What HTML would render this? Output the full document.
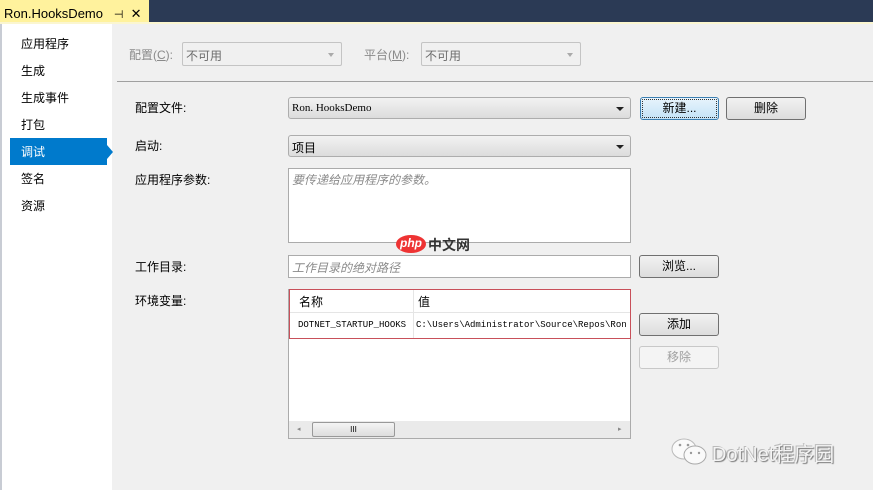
<!DOCTYPE html>
<html><head><meta charset="utf-8"><style>
*{box-sizing:border-box;margin:0;padding:0}
body{width:873px;height:490px;overflow:hidden;background:#f0f0f0;font-family:"Liberation Sans","Noto Sans CJK SC",sans-serif;font-size:12px;color:#000;position:relative}
.a{position:absolute}
.top{left:0;top:0;width:873px;height:22px;background:#2b3a55}
.tab{left:0;top:0;width:149px;height:24px;background:#fff29d;font-size:13px;padding:6px 0 0 4px;white-space:nowrap}
.yl{left:0;top:22px;width:873px;height:2px;background:#fbf6d0}
.side{left:0;top:24px;width:112px;height:466px;background:#fff;border-left:2px solid #c8ccd4}
.nav{left:21px;font-size:12px}
.sel{left:10px;top:138px;width:97px;height:27px;background:#007acc}
.lbl{font-size:12px}
.dd{border:1px solid #adadad;border-radius:3px;background:linear-gradient(#f2f2f2,#dcdcdc);height:22px;font-size:12px;padding:3px 3px}
.dd:after{content:"";position:absolute;right:6px;top:9px;border-left:4px solid transparent;border-right:4px solid transparent;border-top:4px solid #222}
.ddd{border:1px solid #c4c4c4;border-radius:2px;background:#f0f0f0;height:24px;padding:4px 3px;color:#6d6d6d}
.ddd:after{content:"";position:absolute;right:7px;top:10px;border-left:3px solid transparent;border-right:3px solid transparent;border-top:4px solid #aaa}
.btn{border:1px solid #707070;border-radius:3px;background:linear-gradient(#f2f2f2,#dddddd);height:23px;text-align:center;line-height:21px;font-size:12px}
.tb{background:#fff;border:1px solid #ababab}
.ph{color:#8a8a8a;font-style:italic;font-size:12px}
.mono{font-family:"Liberation Mono","Noto Sans CJK SC",monospace;font-size:9px}
</style></head><body>
<div class="a top"></div>
<div class="a tab">Ron.HooksDemo&nbsp;&nbsp;&nbsp;<span style="font-size:11px">⊣</span>&nbsp;&nbsp;✕</div>
<div class="a yl"></div>
<div class="a side"></div>
<div class="a sel"></div>
<div class="a" style="left:107px;top:145px;border-top:7px solid transparent;border-bottom:7px solid transparent;border-left:6px solid #007acc"></div>
<div class="a nav" style="top:35px">应用程序</div>
<div class="a nav" style="top:62px">生成</div>
<div class="a nav" style="top:89px">生成事件</div>
<div class="a nav" style="top:116px">打包</div>
<div class="a nav" style="top:143px;color:#fff">调试</div>
<div class="a nav" style="top:170px">签名</div>
<div class="a nav" style="top:197px">资源</div>

<div class="a lbl" style="left:129px;top:46px;color:#8a8a8a">配置(<u>C</u>):</div>
<div class="a ddd" style="left:182px;top:42px;width:160px">不可用</div>
<div class="a lbl" style="left:364px;top:46px;color:#8a8a8a">平台(<u>M</u>):</div>
<div class="a ddd" style="left:421px;top:42px;width:160px">不可用</div>
<div class="a" style="left:117px;top:81px;width:756px;height:1px;background:#a0a0a0"></div>

<div class="a lbl" style="left:135px;top:99px">配置文件:</div>
<div class="a dd" style="left:288px;top:97px;width:343px;font-family:'Liberation Serif',serif;font-size:11px;padding-top:4px">Ron. HooksDemo</div>
<div class="a btn" style="left:640px;top:97px;width:79px;border-color:#3c7fb1;background:linear-gradient(#e8f4fc,#c4e3f7);outline:1px dotted #333;outline-offset:-3px">新建...</div>
<div class="a btn" style="left:726px;top:97px;width:80px">删除</div>

<div class="a lbl" style="left:135px;top:137px">启动:</div>
<div class="a dd" style="left:288px;top:135px;width:343px">项目</div>

<div class="a lbl" style="left:135px;top:171px">应用程序参数:</div>
<div class="a tb" style="left:288px;top:168px;width:343px;height:75px;padding:2px 3px"><span class="ph">要传递给应用程序的参数。</span></div>

<div class="a" style="left:396px;top:235px;width:30px;height:18px;border-radius:50%;background:#e33;color:#fff;font-style:italic;font-weight:bold;font-size:12px;text-align:center;line-height:17px">php</div>
<div class="a" style="left:428px;top:235px;font-size:14px;font-weight:bold;color:#333">中文网</div>

<div class="a lbl" style="left:135px;top:258px">工作目录:</div>
<div class="a tb" style="left:288px;top:255px;width:343px;height:23px;padding:3px 3px"><span class="ph">工作目录的绝对路径</span></div>
<div class="a btn" style="left:639px;top:255px;width:80px">浏览...</div>

<div class="a lbl" style="left:135px;top:292px">环境变量:</div>
<div class="a tb" style="left:288px;top:289px;width:343px;height:150px"></div>
<div class="a" style="left:289px;top:290px;width:341px;height:23px;background:#fff;border-bottom:1px solid #e5e5e5"></div>
<div class="a lbl" style="left:299px;top:293px">名称</div>
<div class="a" style="left:413px;top:290px;width:1px;height:48px;background:#e5e5e5"></div>
<div class="a lbl" style="left:418px;top:293px">值</div>
<div class="a mono" style="left:298px;top:320px">DOTNET_STARTUP_HOOKS</div>
<div class="a mono" style="left:416px;top:320px;width:214px;overflow:hidden;white-space:nowrap">C:\Users\Administrator\Source\Repos\Ron</div>
<div class="a" style="left:289px;top:289px;width:342px;height:50px;border:1px solid #c8505a"></div>
<div class="a" style="left:289px;top:421px;width:341px;height:17px;background:#eaeaea"></div>
<div class="a" style="left:312px;top:422px;width:83px;height:15px;border:1px solid #999;border-radius:2px;background:linear-gradient(#f4f4f4,#ddd);font-size:8px;text-align:center;line-height:13px">III</div>
<div class="a" style="left:297px;top:425px;font-size:7px;color:#888">◂</div>
<div class="a" style="left:618px;top:425px;font-size:7px;color:#888">▸</div>

<div class="a btn" style="left:639px;top:313px;width:80px">添加</div>
<div class="a btn" style="left:639px;top:346px;width:80px;border-color:#c8c8c8;background:#f4f4f4;color:#a0a0a0">移除</div>

<svg class="a" style="left:670px;top:436px" width="42" height="32" viewBox="0 0 42 32">
<ellipse cx="14" cy="13" rx="12" ry="10" fill="#fafafa" stroke="#bbb"/>
<ellipse cx="25" cy="19" rx="11" ry="9" fill="#fafafa" stroke="#aaa"/>
<circle cx="10" cy="9" r="1.3" fill="#999"/><circle cx="18" cy="9" r="1.3" fill="#999"/>
<circle cx="21" cy="17" r="1.2" fill="#999"/><circle cx="29" cy="17" r="1.2" fill="#999"/>
</svg>
<div class="a" style="left:712px;top:438px;font-size:20px;color:#f4f4f4;text-shadow:1px 1px 1px #777,-1px -1px 0 #bbb">DotNet程序园</div>
</body></html>
